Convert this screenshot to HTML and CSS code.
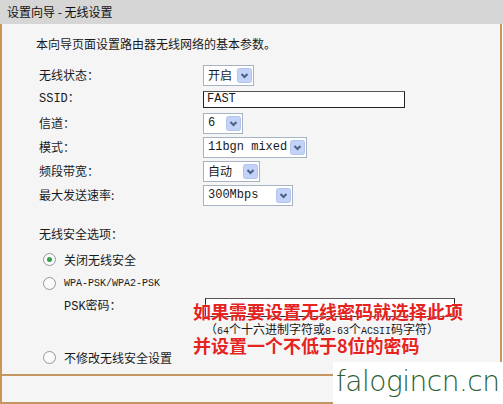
FILE: index.html
```html
<!DOCTYPE html>
<html lang="zh-CN">
<head>
    <meta charset="UTF-8">
    <title>设置向导 - 无线设置</title>
    <link rel="stylesheet" href="styles.css">
</head>
<body>
    <div class="page">
        <div class="title-bar">设置向导 - 无线设置</div>

        <div class="main">
            <p class="intro">本向导页面设置路由器无线网络的基本参数。</p>

            <div class="form">
                <div class="label">无线状态：</div>
                <div class="field">
                    <div class="select w-state"><span class="val">开启</span><span class="arrow"><svg width="15" height="15" viewBox="0 0 15 15"><rect x="0.5" y="0.5" width="14" height="14" rx="2" fill="#c3d3f7" stroke="#b2c4ec"/><polyline points="4.5,6 7.5,9 10.5,6" fill="none" stroke="#4d6185" stroke-width="2"/></svg></span></div>
                </div>

                <div class="label mono">SSID：</div>
                <div class="field">
                    <div class="input ssid">FAST</div>
                </div>

                <div class="label">信道：</div>
                <div class="field">
                    <div class="select w-channel"><span class="val mono">6</span><span class="arrow"><svg width="15" height="15" viewBox="0 0 15 15"><rect x="0.5" y="0.5" width="14" height="14" rx="2" fill="#c3d3f7" stroke="#b2c4ec"/><polyline points="4.5,6 7.5,9 10.5,6" fill="none" stroke="#4d6185" stroke-width="2"/></svg></span></div>
                </div>

                <div class="label">模式：</div>
                <div class="field">
                    <div class="select w-mode"><span class="val mono">11bgn mixed</span><span class="arrow"><svg width="15" height="15" viewBox="0 0 15 15"><rect x="0.5" y="0.5" width="14" height="14" rx="2" fill="#c3d3f7" stroke="#b2c4ec"/><polyline points="4.5,6 7.5,9 10.5,6" fill="none" stroke="#4d6185" stroke-width="2"/></svg></span></div>
                </div>

                <div class="label">频段带宽：</div>
                <div class="field">
                    <div class="select w-band"><span class="val">自动</span><span class="arrow"><svg width="15" height="15" viewBox="0 0 15 15"><rect x="0.5" y="0.5" width="14" height="14" rx="2" fill="#c3d3f7" stroke="#b2c4ec"/><polyline points="4.5,6 7.5,9 10.5,6" fill="none" stroke="#4d6185" stroke-width="2"/></svg></span></div>
                </div>

                <div class="label">最大发送速率:</div>
                <div class="field">
                    <div class="select w-rate"><span class="val mono">300Mbps</span><span class="arrow"><svg width="15" height="15" viewBox="0 0 15 15"><rect x="0.5" y="0.5" width="14" height="14" rx="2" fill="#c3d3f7" stroke="#b2c4ec"/><polyline points="4.5,6 7.5,9 10.5,6" fill="none" stroke="#4d6185" stroke-width="2"/></svg></span></div>
                </div>
            </div>

            <div class="security">
                <div class="sec-title">无线安全选项：</div>
                <div class="radio-row first"><span class="radio checked"></span>关闭无线安全</div>
                <div class="radio-row"><span class="radio"></span><span class="mono small">WPA-PSK/WPA2-PSK</span></div>
                <div class="psk-row">
                    <div class="psk-label"><span class="mono">PSK</span>密码：</div>
                    <div class="input psk"></div>
                </div>
                <div class="hint">（<span class="mono small">64</span>个十六进制字符或<span class="mono small">8-63</span>个<span class="mono small">ACSII</span>码字符）</div>
                <div class="radio-row last"><span class="radio"></span>不修改无线安全设置</div>
            </div>
        </div>

        <div class="footer"></div>

        <div class="note note-1">如果需要设置无线密码就选择此项</div>
        <div class="note note-2">并设置一个不低于8位的密码</div>

        <div class="watermark">falogincn.cn</div>
    </div>
</body>
</html>
```

FILE: styles.css
```css
body {
    margin: 0;
    background: #ffffff;
    font-family: "Noto Sans CJK SC", sans-serif;
    font-size: 12px;
    color: #1a1a1a;
}
.page {
    position: relative;
    width: 503px;
    height: 404px;
    overflow: hidden;
}
.title-bar {
    height: 24px;
    line-height: 24px;
    padding-left: 7px;
    background: #d6d6d6;
    font-size: 12px;
    color: #111;
}
.main {
    height: 352px;
    box-sizing: border-box;
    background: #f5f5f5;
    border-left: 2px solid #c9975a;
    border-right: 2px solid #c9975a;
    border-bottom: 2px solid #c39563;
    margin-right: 1px;
}
.intro {
    margin: 0;
    padding: 12px 0 0 34px;
    line-height: 16px;
}
.mono {
    font-family: "Liberation Mono", "Noto Sans CJK SC", monospace;
}
.small {
    font-size: 10px;
}
.form {
    display: grid;
    grid-template-columns: 164px 1fr;
    grid-auto-rows: 24px;
    align-items: center;
    padding: 11px 0 0 37px;
}
.label {
    line-height: 16px;
}
.field {
    display: flex;
    align-items: center;
}
.select {
    display: flex;
    align-items: center;
    justify-content: space-between;
    height: 21px;
    box-sizing: border-box;
    border: 1px solid #a5b3c4;
    background: #ffffff;
    padding: 0 1px 0 4px;
}
.select .val {
    line-height: 16px;
}
.arrow {
    display: flex;
}
.w-state { width: 51px; }
.w-channel { width: 40px; }
.w-mode { width: 104px; }
.w-band { width: 57px; }
.w-rate { width: 90px; }
.input {
    box-sizing: border-box;
    border: 1px solid #222;
    border-top-color: #555;
    background: #ffffff;
}
.ssid {
    width: 202px;
    height: 17px;
    padding-left: 3px;
    line-height: 15px;
    font-family: "Liberation Mono", monospace;
    font-size: 12px;
}
.security {
    padding: 19px 0 0 37px;
}
.sec-title {
    line-height: 16px;
}
.radio-row {
    display: flex;
    align-items: center;
    height: 24px;
    padding-left: 4px;
}
.radio-row.first {
    margin-top: 5px;
}
.radio-row.last {
    margin-top: 7px;
}
.radio {
    width: 13px;
    height: 13px;
    box-sizing: border-box;
    border: 1px solid #8c98a6;
    border-radius: 50%;
    background: #fafafa;
    margin-right: 8px;
    display: flex;
    align-items: center;
    justify-content: center;
}
.radio.checked::after {
    content: "";
    width: 5px;
    height: 5px;
    border-radius: 50%;
    background: #33a04a;
}
.psk-row {
    display: flex;
    align-items: flex-end;
    height: 22px;
}
.psk-label {
    width: 141px;
    padding-left: 25px;
    line-height: 16px;
    align-self: center;
}
.psk {
    width: 250px;
    height: 19px;
}
.hint {
    padding-left: 166px;
    margin-top: 6px;
    line-height: 12px;
}
.footer {
    height: 26px;
    background: #f5f5f5;
    border-left: 2px solid #c9975a;
    border-right: 2px solid #c9975a;
    border-bottom: 2px solid #c39563;
    margin-right: 1px;
}
.note {
    position: absolute;
    left: 193px;
    font-size: 18px;
    font-weight: bold;
    line-height: 18px;
    color: #e5231f;
    text-shadow: 0 0 2px #ffffff;
}
.note-1 { top: 302px; }
.note-2 { top: 336px; }
.watermark {
    position: absolute;
    right: 0;
    bottom: 0;
    width: 170px;
    height: 42px;
    box-sizing: border-box;
    padding-left: 3px;
    background: #ffffff;
    font-family: "DejaVu Sans", sans-serif;
    font-weight: 200;
    font-size: 28px;
    line-height: 40px;
    letter-spacing: -0.5px;
    color: #2a5e30;
}
```
